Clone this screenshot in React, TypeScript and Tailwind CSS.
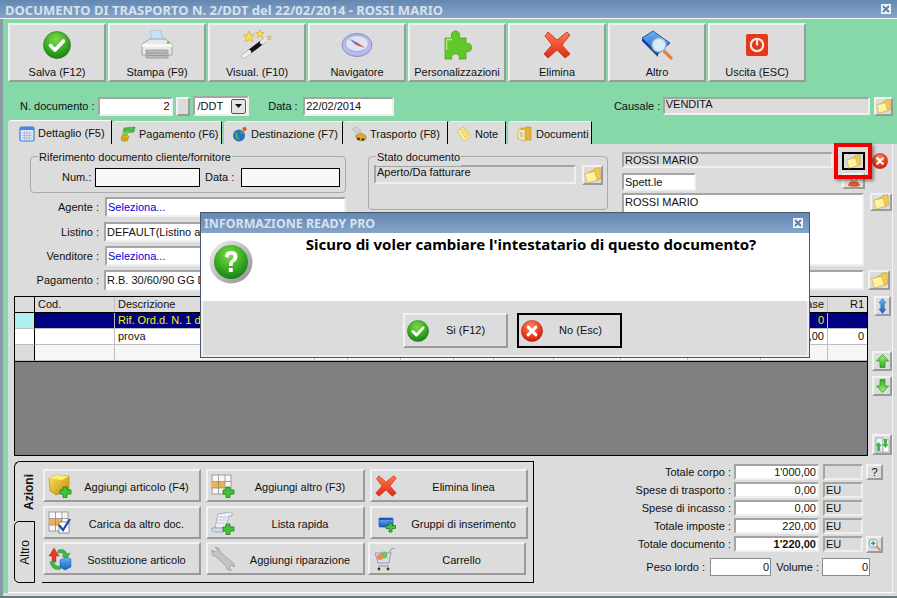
import type { ReactNode } from "react"

const raised = "border-2 border-t-[#f2f2f2] border-l-[#f2f2f2] border-r-[#9a9a9a] border-b-[#9a9a9a] bg-[#dcdcdc]"
const inset = "border-2 border-t-[#a4a4a4] border-l-[#a4a4a4] border-r-[#efefef] border-b-[#efefef]"

function Defs() {
  return (
    <svg className="block w-0 h-0">
      <defs>
        <radialGradient id="gGreen" cx="45%" cy="30%" r="75%">
          <stop offset="0%" stopColor="#7fdc4a" />
          <stop offset="60%" stopColor="#35a822" />
          <stop offset="100%" stopColor="#12791a" />
        </radialGradient>
        <radialGradient id="gRed" cx="45%" cy="30%" r="75%">
          <stop offset="0%" stopColor="#ff8a5a" />
          <stop offset="60%" stopColor="#ee3a1c" />
          <stop offset="100%" stopColor="#b81a0e" />
        </radialGradient>
        <linearGradient id="gX" x1="0" y1="0" x2="0" y2="1">
          <stop offset="0%" stopColor="#ff7a4a" />
          <stop offset="100%" stopColor="#e02a14" />
        </linearGradient>
        <linearGradient id="gGold" x1="0" y1="0" x2="1" y2="1">
          <stop offset="0%" stopColor="#ffe25a" />
          <stop offset="100%" stopColor="#c08a10" />
        </linearGradient>
        <linearGradient id="gBlue" x1="0" y1="0" x2="0" y2="1">
          <stop offset="0%" stopColor="#6ab4f4" />
          <stop offset="100%" stopColor="#1a5cc0" />
        </linearGradient>
        <linearGradient id="gArrow" x1="0" y1="0" x2="0" y2="1">
          <stop offset="0%" stopColor="#a4f07a" />
          <stop offset="100%" stopColor="#2fb02a" />
        </linearGradient>
        <linearGradient id="gRing" x1="0" y1="0" x2="1" y2="1">
          <stop offset="0%" stopColor="#f2f2f2" />
          <stop offset="100%" stopColor="#8c8c8c" />
        </linearGradient>
      </defs>
    </svg>
  )
}

function Folder({ size = 17 }: { size?: number }) {
  return (
    <svg width={size} height={size} viewBox="0 0 16 16" className="shrink-0">
      <path d="M5 5 L10 2.4 L10 1.2 L15 0.6 L15.5 11 L7 14 Z" fill="#f2cc50" stroke="#b8902a" strokeWidth="0.5" />
      <path d="M0.6 6.2 L10 4 L12.6 12.4 L3 15.2 Z" fill="#fff2a0" stroke="#c4a034" strokeWidth="0.6" />
    </svg>
  )
}

function CheckCircle({ size }: { size: number }) {
  return (
    <svg width={size} height={size} viewBox="0 0 28 28" className="shrink-0">
      <circle cx="14" cy="14" r="13.5" fill="url(#gGreen)" stroke="#1a7a1e" strokeWidth="0.6" />
      <path d="M7.5 14.5 L12 19 L20.5 10" fill="none" stroke="#fff" strokeWidth="3.6" strokeLinecap="round" strokeLinejoin="round" />
    </svg>
  )
}

function XCircle({ size }: { size: number }) {
  return (
    <svg width={size} height={size} viewBox="0 0 28 28" className="shrink-0">
      <circle cx="14" cy="14" r="13.5" fill="url(#gRed)" stroke="#a81a10" strokeWidth="0.6" />
      <path d="M9 9 L19 19 M19 9 L9 19" fill="none" stroke="#fff" strokeWidth="3.8" strokeLinecap="round" />
    </svg>
  )
}

function RedX({ size }: { size: number }) {
  return (
    <svg width={size} height={size} viewBox="0 0 28 28" className="shrink-0">
      <path
        d="M5 1 L14 9 L24 1 L27 4 L19 14 L27 23 L22 27 L14 19 L5 27 L1 23 L9 14 L2 5 Z"
        fill="url(#gX)"
        stroke="#c42a14"
        strokeWidth="0.8"
        strokeLinejoin="round"
      />
    </svg>
  )
}

function Printer() {
  return (
    <svg width="32" height="30" viewBox="0 0 32 30">
      <path d="M9 1 L19 0 L23 11 L11 12 Z" fill="#c6e2f6" stroke="#8fb0c8" strokeWidth="0.5" />
      <path d="M1 14 L9 9 L24 9 L31 14 L31 25 L1 25 Z" fill="#e8e8e8" stroke="#8a8a8a" strokeWidth="0.7" />
      <path d="M1 14 L31 14 L31 17 L1 17 Z" fill="#f8f8f8" />
      <path d="M5 20 L27 20 L27 28 L5 28 Z" fill="#bdbdbd" stroke="#808080" strokeWidth="0.6" />
      <path d="M6 23 H26 M6 25.5 H26" stroke="#8c8c8c" strokeWidth="0.8" />
      <circle cx="27" cy="13" r="1" fill="#4ab04a" />
    </svg>
  )
}

function Star({ x, y, r }: { x: number; y: number; r: number }) {
  const pts = Array.from({ length: 10 }, (_, i) => {
    const a = (Math.PI / 5) * i - Math.PI / 2
    const d = i % 2 ? r * 0.45 : r
    return `${x + d * Math.cos(a)},${y + d * Math.sin(a)}`
  }).join(" ")
  return <polygon points={pts} fill="#ffdf40" stroke="#b89a20" strokeWidth="0.5" />
}

function Wand() {
  return (
    <svg width="32" height="30" viewBox="0 0 32 30">
      <path d="M3 26 L24 10" stroke="#111" strokeWidth="4.4" strokeLinecap="round" />
      <path d="M3 26 L8 22.2" stroke="#eee" strokeWidth="4.4" strokeLinecap="round" />
      <path d="M21 12.2 L26 8.4" stroke="#e8e8e8" strokeWidth="4.4" strokeLinecap="round" />
      <Star x={8} y={7} r={6} />
      <Star x={19} y={4} r={4.4} />
      <Star x={28} y={8} r={2.6} />
    </svg>
  )
}

function Compass() {
  return (
    <svg width="32" height="26" viewBox="0 0 32 26">
      <ellipse cx="16" cy="13" rx="15" ry="11.5" fill="#b8bcec" stroke="#7a80b4" strokeWidth="0.8" />
      <ellipse cx="16" cy="11.5" rx="11.5" ry="8" fill="#dfe3f4" stroke="#8a90c0" strokeWidth="0.6" />
      <path d="M8 6.5 L17 11 L15 13 Z" fill="#5a78b8" />
      <path d="M17 11 L24 16 L15 13 Z" fill="#e04a2c" />
      <path d="M15 13 L17 11 L19.5 8 Z" fill="#3aa848" />
    </svg>
  )
}

function Puzzle() {
  return (
    <svg width="30" height="30" viewBox="0 0 30 30">
      <path
        d="M3 8 H10 C8 3 11 1 13.5 1 C16 1 19 3 17 8 H24 V14 C28 12 29.5 15 29.5 17.5 C29.5 20 28 23 24 21 V29 H17 C18.5 25.5 16 24 13.5 24 C11 24 8.5 25.5 10 29 H3 Z"
        fill="#62c82a"
        stroke="#3f9a1c"
        strokeWidth="0.7"
      />
      <path d="M4.5 9.5 H10 M4.5 9.5 V20" stroke="#b6ee7a" strokeWidth="1.4" fill="none" />
    </svg>
  )
}

function BookLens() {
  return (
    <svg width="32" height="30" viewBox="0 0 32 30">
      <path d="M1 8 L12 1 L29 13 L17 24 Z" fill="url(#gBlue)" stroke="#123f94" strokeWidth="0.8" />
      <path d="M1 8 L17 24 L17 27 L1 11 Z" fill="#0e3f9c" />
      <path d="M23 21 L30 28" stroke="#e8823a" strokeWidth="3.2" strokeLinecap="round" />
      <circle cx="18" cy="15" r="7" fill="#d6ecf6" stroke="#9cb4c8" strokeWidth="1.6" />
    </svg>
  )
}

function Power() {
  return (
    <svg width="24" height="24" viewBox="0 0 24 24">
      <rect x="0.5" y="0.5" width="23" height="23" rx="2.5" fill="#e2391c" stroke="#fbe9e4" strokeWidth="0.8" />
      <circle cx="12" cy="12" r="6.2" fill="none" stroke="#f8e4dc" strokeWidth="2.2" />
      <path d="M12 6.5 V12.5" stroke="#f8e4dc" strokeWidth="2.2" />
    </svg>
  )
}

function TabIcon({ kind }: { kind: "cal" | "money" | "globe" | "truck" | "note" | "docs" }) {
  const cls = "shrink-0"
  if (kind === "cal")
    return (
      <svg width="16" height="16" viewBox="0 0 16 16" className={cls}>
        <rect x="1" y="1" width="14" height="14" rx="1.5" fill="#e4e8f4" stroke="#2f7fe0" strokeWidth="1.2" />
        <rect x="1" y="1" width="14" height="3" fill="#3f8ae4" />
        <path d="M3 7 H13 M3 9.5 H13 M3 12 H13 M5.5 5 V14 M8 5 V14 M10.5 5 V14" stroke="#a8aec4" strokeWidth="0.7" />
      </svg>
    )
  if (kind === "money")
    return (
      <svg width="16" height="16" viewBox="0 0 16 16" className={cls}>
        <path d="M4 2 L15 1 L14 6 L3 7 Z" fill="#4cb84a" stroke="#2a8a2a" strokeWidth="0.5" />
        <path d="M3 6 L9 5 L8 9 L2 10 Z" fill="#7cd05a" />
        <ellipse cx="5" cy="11" rx="4" ry="2" fill="#e4b420" stroke="#a88010" strokeWidth="0.5" />
        <ellipse cx="4.5" cy="13.5" rx="3.6" ry="1.8" fill="#d8a818" stroke="#a88010" strokeWidth="0.5" />
      </svg>
    )
  if (kind === "globe")
    return (
      <svg width="16" height="16" viewBox="0 0 16 16" className={cls}>
        <circle cx="7" cy="9.5" r="6" fill="#2a6cc8" />
        <path d="M3 6 Q6 6 6 9 T9 14 Q5 14 3 11 Z M8 4 Q11 5 12 8 L9 8 Z" fill="#3cae44" />
        <circle cx="12.5" cy="3" r="2" fill="#e84a30" />
      </svg>
    )
  if (kind === "truck")
    return (
      <svg width="16" height="16" viewBox="0 0 16 16" className={cls}>
        <path d="M1 3 L6 1 L10 5 L5 7 Z" fill="#d2d2d2" stroke="#9a9a9a" strokeWidth="0.5" />
        <path d="M5 9 L10 7 L15 10 L15 13 L10 15 L5 12 Z" fill="#e8a820" stroke="#8a6410" strokeWidth="0.5" />
        <circle cx="7.5" cy="13" r="1.4" fill="#333" />
        <circle cx="12" cy="13.6" r="1.4" fill="#333" />
      </svg>
    )
  if (kind === "note")
    return (
      <svg width="16" height="16" viewBox="0 0 16 16" className={cls}>
        <path d="M1 5 L8 1 L15 10 L8 15 Z" fill="#fff29a" stroke="#c8a840" strokeWidth="0.6" />
        <path d="M4 5.5 L9 3 M5 7.5 L10.5 5 M6.5 9.5 L12 7 M8 11.5 L13 9" stroke="#c8a840" strokeWidth="0.7" />
      </svg>
    )
  return (
    <svg width="16" height="16" viewBox="0 0 16 16" className={cls}>
      <path d="M4 2 H9 V1 L14 1 V14 H4 Z" fill="#e4b436" stroke="#a8842a" strokeWidth="0.5" />
      <path d="M1 4 L8 3 V15 L1 13 Z" fill="#ffe98a" stroke="#b89a30" strokeWidth="0.5" />
      <rect x="3" y="6" width="3" height="5" fill="#c8c8c8" />
    </svg>
  )
}

function CubePlus() {
  return (
    <svg width="24" height="24" viewBox="0 0 24 24">
      <path d="M1 4 L8 1 L21 2 L21 17 L8 21 L2 17 Z" fill="url(#gGold)" stroke="#a07810" strokeWidth="0.5" />
      <path d="M1 4 L14 6 L21 2 L8 1 Z" fill="#ffec70" />
      <Plus />
    </svg>
  )
}

function Plus() {
  return <path d="M15 13 H19 V16 H23 V20 H19 V23.5 H15 V20 H12 V16 H15 Z" fill="#3ec83a" stroke="#1a7a1a" strokeWidth="0.8" />
}

function TablePlus({ check }: { check?: boolean }) {
  return (
    <svg width="24" height="24" viewBox="0 0 24 24">
      <rect x="1" y="1" width="19" height="19" fill="#f8f8f8" stroke="#8a8a8a" strokeWidth="0.8" />
      <rect x="1" y="8" width="13" height="6" fill="#f6b04a" />
      <path d="M1 7.5 H20 M1 14 H20 M7.5 1 V20 M14 1 V20" stroke="#8a8a8a" strokeWidth="0.8" />
      {check ? (
        <>
          <rect x="11" y="11" width="10" height="11" fill="#fff" stroke="#4a4a4a" strokeWidth="0.6" />
          <path d="M11 14 L15 19 L22 8" fill="none" stroke="#1a50b4" strokeWidth="2.2" />
        </>
      ) : (
        <Plus />
      )}
    </svg>
  )
}

function ScrollPlus() {
  return (
    <svg width="24" height="24" viewBox="0 0 24 24">
      <path d="M7 3 L19 1 Q22.5 2 21 5 L18 5 L14 17 L4 17 Z" fill="#eef0f8" stroke="#8a90a8" strokeWidth="0.7" />
      <path d="M1 17 H14 L13 21 H4 Q0 20.5 1 17 Z" fill="#d4d8e8" stroke="#8a90a8" strokeWidth="0.7" />
      <path d="M8 6 H16 M7.5 9 H15 M6.5 12 H14" stroke="#b0b4c8" strokeWidth="0.8" />
      <Plus />
    </svg>
  )
}

function Swap() {
  return (
    <svg width="24" height="24" viewBox="0 0 24 24">
      <path d="M6 1 L11 9 H8 V15 H4 V9 H1 Z" fill="#e83a1c" stroke="#a01a10" strokeWidth="0.4" />
      <path d="M10 3 Q17 1 19 7 L22 6 L19 12 L14 9 L16 8 Q15 5 10 6 Z" fill="#3eb84a" stroke="#1a7a2a" strokeWidth="0.4" />
      <path d="M2 15 L7 13 L6 16 Q8 20 13 19 L13 22 Q6 24 3 18 Z" fill="#3eb84a" stroke="#1a7a2a" strokeWidth="0.4" />
      <path d="M12 13 L18 10 L23 12 V20 L17 23 L12 20 Z" fill="url(#gBlue)" stroke="#123f94" strokeWidth="0.4" />
    </svg>
  )
}

function Wrench() {
  return (
    <svg width="24" height="24" viewBox="0 0 24 24">
      <path d="M1 3 L4 5 L7 2 L4 0.5 Q9 0 9 5 L21 15 Q24 16 23 20 L20 18 L18 21 L20.5 23 Q15 24 15 19 L4 9 Q0 9 1 3 Z" fill="#c4c4c4" stroke="#8c8c8c" strokeWidth="0.6" />
    </svg>
  )
}

function GroupPlus() {
  return (
    <svg width="24" height="24" viewBox="0 0 24 24">
      <rect x="4" y="7" width="14" height="9" rx="1" fill="url(#gBlue)" stroke="#123f94" strokeWidth="0.6" />
      <rect x="4" y="7" width="14" height="2" fill="#1c58c0" />
      <path d="M14 12 H17 V14.5 H20.5 V17.5 H17 V21 H14 V17.5 H11 V14.5 H14 Z" fill="#3ec83a" stroke="#1a7a1a" strokeWidth="0.8" />
    </svg>
  )
}

function Cart() {
  return (
    <svg width="24" height="24" viewBox="0 0 24 24">
      <path d="M22 1 L18 2 L16 6 H2 L5 16 H16 L18 5" fill="#d8d8f0" stroke="#8a8a9c" strokeWidth="0.8" />
      <circle cx="11" cy="8" r="3.4" fill="#68c85a" />
      <circle cx="7" cy="10" r="3" fill="#f08a50" />
      <path d="M5 19 H16" stroke="#9a9a9a" strokeWidth="1.2" />
      <circle cx="6" cy="22" r="1.4" fill="#333" />
      <circle cx="15" cy="22" r="1.4" fill="#333" />
    </svg>
  )
}

function Arrow({ down }: { down?: boolean }) {
  return (
    <svg width="13" height="14" viewBox="0 0 13 14" className={down ? "rotate-180" : ""}>
      <path d="M6.5 0.5 L12.5 7 H9 V13.5 H4 V7 H0.5 Z" fill="url(#gArrow)" stroke="#258a22" strokeWidth="0.7" />
    </svg>
  )
}

function UpDown() {
  return (
    <svg width="9" height="16" viewBox="0 0 9 18">
      <path d="M4.5 0.5 L8.5 5.5 H6.5 V12.5 H8.5 L4.5 17.5 L0.5 12.5 H2.5 V5.5 H0.5 Z" fill="url(#gBlue)" stroke="#2060b0" strokeWidth="0.5" />
    </svg>
  )
}

function DocSwap() {
  return (
    <svg width="16" height="16" viewBox="0 0 16 16">
      <path d="M2 1 H9 V15 H2 Z" fill="#eef3fa" stroke="#7c8ca0" strokeWidth="0.6" />
      <path d="M9 3 H15 V15 H9 Z" fill="#fff" stroke="#7c8ca0" strokeWidth="0.6" />
      <path d="M4.5 5 L8 9 H6.2 V14 H3.2 V9 H1.2 Z" fill="#3eb84a" />
      <path d="M11.5 11 L8.2 7 H10 V2 H13 V7 H14.8 Z" fill="#3eb84a" />
    </svg>
  )
}

function LensPlus() {
  return (
    <svg width="15" height="15" viewBox="0 0 16 16">
      <path d="M9.5 9.5 L14.5 14.5" stroke="#e88a3a" strokeWidth="2.4" strokeLinecap="round" />
      <circle cx="6.5" cy="6.5" r="5" fill="#d8eef6" stroke="#7a9cb0" strokeWidth="1" />
      <path d="M6.5 3.8 V9.2 M3.8 6.5 H9.2" stroke="#2aa82a" strokeWidth="1.6" />
    </svg>
  )
}

function PersonLens() {
  return (
    <svg width="16" height="14" viewBox="0 0 16 16">
      <circle cx="8" cy="5" r="3.6" fill="#cfe4f2" stroke="#5a88b0" strokeWidth="1" />
      <path d="M1 13 Q3 7 8 9 Q13 7 15 13 Q8 16 1 13 Z" fill="#e0562a" />
    </svg>
  )
}

function CloseBox() {
  return (
    <span className="w-[10px] h-[10px] bg-[#eef3f8] flex items-center justify-center">
      <svg width="8" height="8" viewBox="0 0 8 8">
        <path d="M1 1 L7 7 M7 1 L1 7" stroke="#5f82ad" strokeWidth="2" />
      </svg>
    </span>
  )
}

function ToolButton({ icon, label }: { icon: ReactNode; label: string }) {
  return (
    <div className={`${raised} w-[98px] h-[59px] flex flex-col items-center`}>
      <div className="h-[39px] flex items-center justify-center pt-[2px]">{icon}</div>
      <div className="text-[11px] leading-[16px] text-[#111] pt-[1px]">{label}</div>
    </div>
  )
}

function Field({
  className = "",
  right,
  bold,
  gray,
  blue,
  children,
}: {
  className?: string
  right?: boolean
  bold?: boolean
  gray?: boolean
  blue?: boolean
  children?: ReactNode
}) {
  return (
    <div
      className={`${inset} ${gray ? "bg-[#dcdcdc]" : "bg-white"} ${right ? "justify-end pr-[1px]" : "pl-[1px]"} ${bold ? "font-bold" : ""} ${blue ? "text-[#0000e0]" : "text-[#111]"} flex items-center overflow-hidden whitespace-nowrap text-[11px] leading-none ${className}`}
    >
      {children}
    </div>
  )
}

function BlackField({ className }: { className: string }) {
  return <div className={`border border-black bg-[#f8f8f8] h-[19px] ${className}`} />
}

function IconButton({ className = "", children }: { className?: string; children?: ReactNode }) {
  return <div className={`${raised} flex items-center justify-center shrink-0 ${className}`}>{children}</div>
}

function Tab({
  icon,
  label,
  className,
  active,
}: {
  icon: "cal" | "money" | "globe" | "truck" | "note" | "docs"
  label: string
  className: string
  active?: boolean
}) {
  return (
    <div
      className={`${active ? "h-[24px] border-t-white" : "h-[23px] border-t-[#f2f2f2]"} border-t border-r border-r-black bg-[#dcdcdc] rounded-tl-[4px] flex items-center gap-[3px] text-[11px] text-[#111] whitespace-nowrap pt-[2px] ${className}`}
    >
      <TabIcon kind={icon} />
      {label}
    </div>
  )
}

function FormRow({ label, className = "", children }: { label: string; className?: string; children: ReactNode }) {
  return (
    <div className={`flex items-center ${className}`}>
      <div className="w-[70px] text-right text-[11px] text-[#111] whitespace-nowrap shrink-0 pr-[1px]">{label} :</div>
      {children}
    </div>
  )
}

function Action({ icon, label, className = "" }: { icon: ReactNode; label: string; className?: string }) {
  return (
    <div className={`${raised} h-[33px] w-[158px] flex items-center pl-[3px] text-[11px] text-[#111] ${className}`}>
      <div className="w-[24px] shrink-0 flex">{icon}</div>
      <div className="flex-1 text-center whitespace-nowrap pl-[2px] pt-[3px]">{label}</div>
    </div>
  )
}

function Total({
  label,
  value,
  bold,
  unit,
  extra,
}: {
  label: string
  value: string
  bold?: boolean
  unit?: string
  extra?: ReactNode
}) {
  return (
    <div className="flex items-center h-[16px] mb-[2px]">
      <div className="w-[200px] text-right text-[11px] text-[#111] whitespace-nowrap pr-[3px]">{label} :</div>
      <Field right bold={bold} className="w-[85px] h-[16px]">
        {value}
      </Field>
      <Field gray className="w-[40px] h-[16px] ml-[4px]">
        {unit}
      </Field>
      {extra}
    </div>
  )
}

const gridCols = "grid grid-cols-[20px_80px_200px_33px_53px_53px_40px_60px_67px_67px_73px_67px_39px]"

function GridRow({
  bg,
  first,
  text,
  rowClass = "",
  desc,
  base,
  r1,
}: {
  bg: string
  first: string
  text?: string
  rowClass?: string
  desc?: string
  base?: string
  r1?: string
}) {
  const cell = `border-r border-b border-[#bdbdbd] h-[16px] overflow-hidden whitespace-nowrap text-[11px] leading-[15px] ${text ?? ""}`
  return (
    <div className={`${gridCols} ${bg} ${rowClass}`}>
      <div className={`${first} border-r border-r-black border-b border-b-[#bdbdbd] h-[16px]`} />
      <div className={cell} />
      <div className={`${cell} pl-[3px]`}>{desc}</div>
      {[0, 1, 2, 3, 4, 5, 6, 7].map((i) => (
        <div key={i} className={cell} />
      ))}
      <div className={`${cell} text-right pr-[3px]`}>{base}</div>
      <div className={`${cell} text-right pr-[3px] border-r-0`}>{r1}</div>
    </div>
  )
}

export default function App() {
  return (
    <div className="relative w-[897px] h-[598px] overflow-hidden bg-[#86d8a8] font-['Liberation_Sans',Arial,sans-serif] text-[11px]">
      <Defs />
      {/* title bar */}
      <div className="h-[18px] bg-gradient-to-b from-[#6488b2] to-[#86a4c8] flex items-center justify-between pl-[5px] pr-[6px]">
        <span className="font-['Noto_Sans',sans-serif] font-bold text-[13px] leading-[18px] pt-[2px] text-[#d6e2ee] whitespace-nowrap">
          DOCUMENTO DI TRASPORTO N. 2/DDT del 22/02/2014 - ROSSI MARIO
        </span>
        <CloseBox />
      </div>
      <div className="h-[1px] bg-[#f4f8f4]" />

      <div className="border-l-[3px] border-l-[#8a9aa4] pl-[5px] pr-[4px]">
        {/* toolbar */}
        <div className="flex gap-[2px] pt-[4px]">
          <ToolButton icon={<CheckCircle size={28} />} label="Salva (F12)" />
          <ToolButton icon={<Printer />} label="Stampa (F9)" />
          <ToolButton icon={<Wand />} label="Visual. (F10)" />
          <ToolButton icon={<Compass />} label="Navigatore" />
          <ToolButton icon={<Puzzle />} label="Personalizzazioni" />
          <ToolButton icon={<RedX size={28} />} label="Elimina" />
          <ToolButton icon={<BookLens />} label="Altro" />
          <ToolButton icon={<Power />} label="Uscita (ESC)" />
        </div>

        {/* document row */}
        <div className="flex items-center h-[20px] mt-[14px] text-[11px] text-[#111]">
          <span className="ml-[12px] w-[78px] whitespace-nowrap">N. documento :</span>
          <Field right className="w-[75px] h-[19px] bg-[#fbfbfb]">
            2
          </Field>
          <div className={`${raised} w-[15px] h-[19px] ml-[3px]`} />
          <div className={`${inset} w-[56px] h-[20px] ml-[3px] bg-white flex items-center justify-between pl-[2px] pr-[1px]`}>
            /DDT
            <span className="w-[15px] h-[15px] border border-[#555] rounded-[2px] bg-[#e4e4e4] flex items-center justify-center">
              <svg width="7" height="4" viewBox="0 0 7 4">
                <path d="M0 0 H7 L3.5 4 Z" fill="#111" />
              </svg>
            </span>
          </div>
          <span className="ml-[19px] w-[35px] whitespace-nowrap">Data :</span>
          <Field className="w-[91px] h-[19px]">22/02/2014</Field>
          <span className="ml-[220px] w-[49px] whitespace-nowrap">Causale :</span>
          <Field gray className="w-[208px] h-[18px] !items-start">
            VENDITA
          </Field>
          <IconButton className="w-[19px] h-[19px] ml-[4px]">
            <Folder size={15} />
          </IconButton>
        </div>

        {/* tabs */}
        <div className="flex items-end h-[24px] mt-[4px]">
          <Tab active icon="cal" label="Dettaglio (F5)" className="w-[104px] pl-[11px]" />
          <Tab icon="money" label="Pagamento (F6)" className="w-[110px] pl-[8px]" />
          <Tab icon="globe" label="Destinazione (F7)" className="w-[119px] ml-[2px] pl-[8px]" />
          <Tab icon="truck" label="Trasporto (F8)" className="w-[105px] pl-[8px]" />
          <Tab icon="note" label="Note" className="w-[58px] pl-[8px]" />
          <Tab icon="docs" label="Documenti" className="w-[84px] ml-[2px] pl-[9px]" />
        </div>

        {/* detail panel */}
        <div className="h-[449px] -mr-[4px] border-r-[4px] border-r-[#dcdcdc] bg-[#dcdcdc] border-b border-b-white shadow-[inset_-1px_0_0_#f4f4f4]">
          <div className="flex h-[152px] pl-[22px]">
            <div className="w-[316px] pt-[12px]">
              <div className="relative h-[37px] border border-[#aaaaaa] rounded-[4px] flex items-start pt-[11px] pl-[31px] text-[#111]">
                <span className="absolute -top-[8px] left-[7px] px-[1px] bg-[#dcdcdc] whitespace-nowrap">
                  Riferimento documento cliente/fornitore
                </span>
                <span className="w-[33px] leading-[19px] whitespace-nowrap">Num.:</span>
                <BlackField className="w-[105px]" />
                <span className="ml-[5px] w-[36px] leading-[19px] whitespace-nowrap">Data :</span>
                <BlackField className="w-[99px]" />
              </div>
              <FormRow label="Agente" className="mt-[4px] h-[20px]">
                <Field blue className="w-[241px] h-[20px] ml-[5px]">
                  Seleziona...
                </Field>
              </FormRow>
              <FormRow label="Listino" className="mt-[5px] h-[20px]">
                <Field className="w-[242px] h-[20px] ml-[4px]">DEFAULT(Listino al</Field>
              </FormRow>
              <FormRow label="Venditore" className="mt-[4px] h-[20px]">
                <Field blue className="w-[241px] h-[20px] ml-[5px]">
                  Seleziona...
                </Field>
              </FormRow>
              <FormRow label="Pagamento" className="mt-[4px] h-[21px]">
                <Field className="w-[242px] h-[21px] ml-[4px]">R.B. 30/60/90 GG D</Field>
              </FormRow>
            </div>

            <div className="w-[240px] ml-[22px] pt-[12px]">
              <div className="relative h-[54px] border border-[#aaaaaa] rounded-[4px] flex items-start pt-[8px] pl-[5px]">
                <span className="absolute -top-[8px] left-[7px] px-[1px] bg-[#dcdcdc] whitespace-nowrap text-[#111]">
                  Stato documento
                </span>
                <Field gray className="w-[202px] h-[19px] !items-start">
                  Aperto/Da fatturare
                </Field>
                <IconButton className="w-[21px] h-[20px] ml-[6px]">
                  <Folder />
                </IconButton>
              </div>
            </div>

            <div className="w-[271px] ml-[14px] pt-[8px]">
              <div className="flex h-[18px]">
                <Field gray className="w-[211px] h-[16px]">
                  ROSSI MARIO
                </Field>
                <div className="w-[23px] h-[18px] ml-[9px] border-2 border-black bg-[#dcdcdc] flex items-center justify-center shrink-0">
                  <Folder size={15} />
                </div>
                <div className="ml-[7px] h-[18px] flex items-center">
                  <XCircle size={16} />
                </div>
              </div>
              <div className="flex h-[18px] mt-[3px]">
                <Field className="w-[74px] h-[18px]">Spett.le</Field>
                <IconButton className="w-[23px] h-[16px] ml-[146px]">
                  <PersonLens />
                </IconButton>
              </div>
              <div className="flex mt-[2px] h-[73px]">
                <Field className="w-[242px] h-[73px] !items-start pt-[2px]">ROSSI MARIO</Field>
                <IconButton className="w-[22px] h-[18px] ml-[6px]">
                  <Folder size={16} />
                </IconButton>
              </div>
              <div className="flex mt-[4px]">
                <Field className="w-[242px] h-[20px]" />
                <IconButton className="w-[22px] h-[20px] ml-[4px]">
                  <Folder />
                </IconButton>
              </div>
            </div>
          </div>

          {/* lines grid */}
          <div className="flex h-[160px] pl-[6px]">
            <div className="w-[854px] h-[160px] border border-black bg-[#808080] text-[#111]">
              <div className={`${gridCols} bg-[#dcdcdc] border-b border-b-black`}>
                <div className="border-r border-black h-[15px]" />
                <div className="border-r border-[#bdbdbd] pl-[3px] h-[15px] leading-[14px]">Cod.</div>
                <div className="border-r border-[#bdbdbd] pl-[3px] h-[15px] leading-[14px] col-span-9">Descrizione</div>
                <div className="border-r border-[#bdbdbd] pr-[3px] h-[15px] leading-[14px] text-right">Base</div>
                <div className="pr-[3px] h-[15px] leading-[14px] text-right">R1</div>
              </div>
              <GridRow bg="bg-[#000080]" first="bg-[#b0f0f0]" text="text-[#f4f400]" desc="Rif. Ord.d. N. 1 d" base="0" />
              <GridRow bg="bg-white" first="bg-white" desc="prova" base="1'000,00" r1="0" />
              <GridRow bg="bg-[#f6f6f6]" first="bg-[#dcdcdc]" rowClass="border-b border-b-black" />
            </div>
            <div className="w-[20px] ml-[4px] flex flex-col items-center">
              <IconButton className="w-[17px] h-[20px]">
                <UpDown />
              </IconButton>
              <IconButton className="w-[20px] h-[20px] mt-[35px]">
                <Arrow />
              </IconButton>
              <IconButton className="w-[20px] h-[20px] mt-[5px]">
                <Arrow down />
              </IconButton>
              <IconButton className="w-[20px] h-[21px] mt-[38px]">
                <DocSwap />
              </IconButton>
            </div>
          </div>

          {/* actions and totals */}
          <div className="flex mt-[5px] pl-[6px]">
            <div className="flex w-[520px] h-[122px]">
              <div className="w-[28px] shrink-0 flex flex-col">
                <div className="h-[60px] border-l border-t border-black rounded-tl-[6px] flex items-center justify-center">
                  <span className="[writing-mode:vertical-rl] rotate-180 font-bold text-[12px] text-[#111]">Azioni</span>
                </div>
                <div className="h-[62px] w-[21px] border border-black rounded-l-[5px] flex items-center justify-center">
                  <span className="[writing-mode:vertical-rl] rotate-180 text-[12px] text-[#111]">Altro</span>
                </div>
              </div>
              <div className="flex-1 border-t border-r border-b border-black pl-[1px] pt-[7px] flex flex-col">
                <div className="flex gap-[5px] h-[33px]">
                  <Action icon={<CubePlus />} label="Aggiungi articolo (F4)" />
                  <Action icon={<TablePlus />} label="Aggiungi altro (F3)" className="!w-[159px]" />
                  <Action icon={<RedX size={22} />} label="Elimina linea" />
                </div>
                <div className="flex gap-[5px] h-[33px] mt-[4px]">
                  <Action icon={<TablePlus check />} label="Carica da altro doc." />
                  <Action icon={<ScrollPlus />} label="Lista rapida" className="!w-[159px]" />
                  <Action icon={<GroupPlus />} label="Gruppi di inserimento" />
                </div>
                <div className="flex gap-[5px] h-[33px] mt-[3px]">
                  <Action icon={<Swap />} label="Sostituzione articolo" />
                  <Action icon={<Wrench />} label="Aggiungi riparazione" className="!w-[159px]" />
                  <Action icon={<Cart />} label="Carrello" className="-ml-[2px]" />
                </div>
              </div>
            </div>

            <div className="pt-[3px]">
              <Total
                label="Totale corpo"
                value="1'000,00"
                extra={
                  <IconButton className="w-[17px] h-[16px] ml-[3px] text-[11px] text-[#111]">?</IconButton>
                }
              />
              <Total label="Spese di trasporto" value="0,00" unit="EU" />
              <Total label="Spese di incasso" value="0,00" unit="EU" />
              <Total label="Totale imposte" value="220,00" unit="EU" />
              <Total
                label="Totale documento"
                value="1'220,00"
                bold
                unit="EU"
                extra={
                  <IconButton className="w-[17px] h-[17px] ml-[3px]">
                    <LensPlus />
                  </IconButton>
                }
              />
              <div className="flex items-center h-[18px] mt-[6px] text-[#111]">
                <span className="w-[176px] text-right whitespace-nowrap pr-[5px]">Peso lordo :</span>
                <Field right className="w-[61px] h-[18px] !border !border-[#8a8a8a]">
                  0
                </Field>
                <span className="w-[51px] text-right whitespace-nowrap pr-[3px]">Volume :</span>
                <Field right className="w-[48px] h-[18px] !border !border-[#8a8a8a]">
                  0
                </Field>
              </div>
            </div>
          </div>
        </div>
      </div>
      <div className="h-[3px] bg-[#dcdcdc] border-l-[3px] border-l-[#8a9aa4]" />
      <div className="h-[2px] bg-[#6a7a80]" />

      {/* red highlight around the folder button */}
      <div className="absolute left-[834px] top-[143px] w-[38px] h-[36px] border-[4px] border-[#f00000] shadow-[2px_2px_3px_rgba(0,0,0,0.4)]" />

      {/* confirm dialog */}
      <div className="absolute left-[200px] top-[212px] w-[610px] h-[146px] border border-[#46586a] bg-[#dcdcdc] flex flex-col">
        <div className="h-[20px] bg-gradient-to-b from-[#6488b2] to-[#86a4c8] flex items-center justify-between pl-[3px] pr-[6px]">
          <span className="font-['Noto_Sans',sans-serif] font-bold text-[12.4px] leading-[18px] pt-[2px] text-[#d6e2ee] whitespace-nowrap">
            INFORMAZIONE READY PRO
          </span>
          <CloseBox />
        </div>
        <div className="h-[68px] bg-white flex pl-[8px]">
          <svg width="44" height="44" viewBox="0 0 44 44" className="shrink-0 mt-[7px]">
            <circle cx="22" cy="22" r="21.5" fill="url(#gRing)" />
            <circle cx="22" cy="22" r="17" fill="url(#gGreen)" />
            <path d="M16 17 Q16 11 22 11 Q28.5 11 28.5 16.5 Q28.5 20 25 22 Q23.5 23 23.5 26 H20 Q19.8 21.5 22.5 20 Q24.5 18.8 24.5 16.8 Q24.5 14.5 22 14.5 Q19.8 14.5 19.5 17.5 Z" fill="#fff" />
            <rect x="19.8" y="28" width="4" height="4" fill="#fff" />
          </svg>
          <div className="flex-1 text-center pt-[1px] font-['Noto_Sans',sans-serif] font-bold text-[15px] leading-[20px] text-black whitespace-nowrap">
            Sicuro di voler cambiare l'intestatario di questo documento?
          </div>
        </div>
        <div className="flex-1 flex gap-[9px] pt-[12px] pl-[200px] border-x-2 border-b-2 border-[#efefef]">
          <div className={`${raised} w-[105px] h-[35px] flex items-center pl-[2px] text-[11px] text-[#111]`}>
            <CheckCircle size={22} />
            <span className="flex-1 text-center pl-[2px] pr-[6px]">Si (F12)</span>
          </div>
          <div className="w-[105px] h-[35px] border-2 border-black bg-[#dcdcdc] flex items-center pl-[2px] text-[11px] text-[#111]">
            <XCircle size={22} />
            <span className="flex-1 text-center pr-[2px]">No (Esc)</span>
          </div>
        </div>
      </div>
    </div>
  )
}
